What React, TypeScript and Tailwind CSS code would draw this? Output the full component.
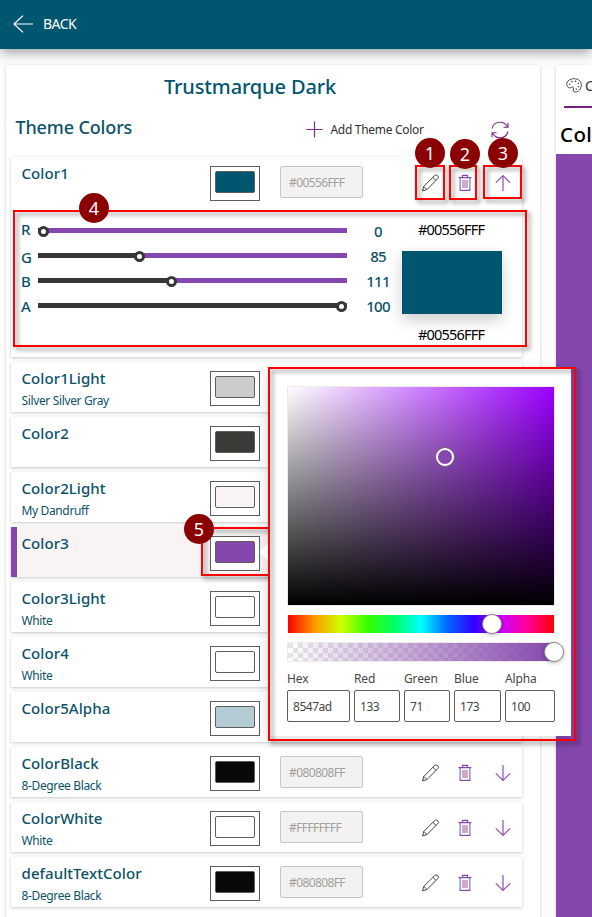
import React from "react";

type IconProps = { className?: string };

const BackArrow = () => (
  <svg width="20" height="18" viewBox="0 0 20 18" fill="none" stroke="#fff" strokeWidth="1.2">
    <path d="M20 9H1M10 .6 1 9l9 8.4" />
  </svg>
);

const Plus = () => (
  <svg className="shrink-0" width="17" height="17" viewBox="0 0 17 17" fill="none" stroke="#7b2a87" strokeWidth="1.2">
    <path d="M8.5 0.5v16M0.5 8.5h16" />
  </svg>
);

const Refresh = () => (
  <svg className="shrink-0" width="18" height="18" viewBox="0 0 18 18" fill="none" stroke="#7b2a87" strokeWidth="1.1">
    <path d="M1 7.500C1.900 3.900 5 1.300 9 1.300c3.400 0 6.200 1.900 7.500 4.900M17 1.700v4.500h-4.500" />
    <path d="M17 10.500c-.9 3.600-4 6.200-8 6.200-3.400 0-6.200-1.900-7.500-4.900M1 16.300v-4.500h4.500" />
  </svg>
);

const Palette = () => (
  <svg className="shrink-0" width="16" height="15" viewBox="0 0 16 15" fill="none" stroke="#4a4844" strokeWidth="1">
    <path d="M5.500 9.300C4 10.600.700 9.600.700 6.300.700 3 4 .700 8.200.700c4.300 0 7.100 2.500 7.100 6.300 0 4-2.700 7-6 7-2.300 0-2.500-1.600-1.800-3.100.6-1.300-.8-2.500-2-1.600Z" />
    <g fill="#4a4844" stroke="none">
      <circle cx="3.700" cy="6.200" r=".8" /><circle cx="6" cy="3.600" r=".8" /><circle cx="9.500" cy="3.200" r=".8" />
      <circle cx="12.300" cy="5.500" r=".8" /><circle cx="12.500" cy="8.700" r=".8" /><circle cx="10.300" cy="11.300" r=".8" />
    </g>
  </svg>
);

const Pencil = ({ className }: IconProps) => (
  <svg className={className} width="18" height="18" viewBox="0 0 18 18" fill="none" stroke="#45453f" strokeWidth="1">
    <path d="M1.500 16.900 2.800 12.400 13.600 1.600a2.150 2.150 0 0 1 3.100 3.100L5.900 15.600ZM11.900 3.300l3.100 3.100M2.800 12.400l3.100 3.200" />
  </svg>
);

const Trash = ({ className }: IconProps) => (
  <svg className={className} width="18" height="18" viewBox="0 0 18 18" fill="none" stroke="#8547ad" strokeWidth="1.2">
    <path d="M2.500 3.600h13M6.500 3.600V1.400h5v2.200" />
    <path d="M4.100 3.600v13M13.900 3.600v13" stroke="#7474cf" strokeWidth="1.200" />
    <path d="M3.700 16.400h10.600" />
    <path d="M7 6v8M9 6v8M11 6v8" stroke="#b76ca2" />
  </svg>
);

const Arrow = ({ up }: { up?: boolean }) => (
  <svg className={up ? "" : "rotate-180"} width="18" height="18" viewBox="0 0 18 18" fill="none" stroke="#9050b8" strokeWidth="1.2">
    <path d="M9 17V1.500M1.800 8.700 9 1.500l7.200 7.200" />
  </svg>
);

const Swatch = ({ fill }: { fill: string }) => (
  <div className="mt-[9px] h-[35px] w-[50px] shrink-0 border border-[#605e5c] bg-white p-1">
    <div className={`h-[22px] w-10 rounded-[2px] border border-[#605e5c] ${fill}`} />
  </div>
);

type RowData = { name: string; note?: string; fill: string; hex?: string; active?: boolean; open?: boolean };

const RowHead = ({ name, note, fill, hex, active, open }: RowData) => (
  <div className={`flex h-[50px] items-start ${active ? "border-l-[6px] border-[#8547ad] bg-[#f8f4f4]" : ""}`}>
    <div className={`shrink-0 text-[#0b5268] ${active ? "w-[193px] pl-[4.500px]" : "w-[199px] pl-[10.500px]"}`}>
      <div className="mt-[5px] text-[15px] leading-[22px] font-medium tracking-[0.005em]">{name}</div>
      {note && <div className="mt-[4px] text-[12px] leading-4 tracking-[-0.03em]">{note}</div>}
    </div>
    <Swatch fill={fill} />
    {hex && (
      <>
        <div className="mt-[9px] ml-5 flex h-8 w-[83px] items-center rounded-[2px] border border-[#c8c6c4] bg-[#f3f2f1] pt-px pl-2 text-[12px] tracking-[-0.05em] text-[#a19f9d]">
          {hex}
        </div>
        <div className="mt-[17px] ml-[58px] flex">
          <Pencil />
          <Trash className="ml-[17px]" />
          <div className="ml-[20px]"><Arrow up={open} /></div>
        </div>
      </>
    )}
  </div>
);

const rows: RowData[] = [
  { name: "Color1Light", note: "Silver Silver Gray", fill: "bg-[#cccccb]" },
  { name: "Color2", fill: "bg-[#3a3a36]" },
  { name: "Color2Light", note: "My Dandruff", fill: "bg-[#f8f4f4]" },
  { name: "Color3", fill: "bg-[#8547ad]", active: true },
  { name: "Color3Light", note: "White", fill: "bg-white" },
  { name: "Color4", note: "White", fill: "bg-white" },
  { name: "Color5Alpha", fill: "bg-[#b3ccd3]" },
  { name: "ColorBlack", note: "8-Degree Black", fill: "bg-[#080808]", hex: "#080808FF" },
  { name: "ColorWhite", note: "White", fill: "bg-white", hex: "#FFFFFFFF" },
  { name: "defaultTextColor", note: "8-Degree Black", fill: "bg-[#080808]", hex: "#080808FF" },
];

const cardShadow = "shadow-[0_1px_3px_rgba(0,0,0,0.22)]";

const channels = [
  { label: "R", value: 0, at: 5.5, shift: "pb-[3px]" },
  { label: "G", value: 85, at: 101.5, shift: "pt-[4px]" },
  { label: "B", value: 111, at: 133.5, shift: "pt-[2px]" },
  { label: "A", value: 100, at: 303.5, shift: "pt-[2px]" },
];

const Slider = ({ label, value, at, shift }: { label: string; value: number; at: number; shift: string }) => (
  <div className="flex h-[25px] items-center text-[15px] leading-[25px] font-medium text-[#0b5268]">
    <div className={`w-[17px] ${shift}`}>{label}</div>
    <div className="relative h-[5px] w-[309px] bg-[#8547ad]">
      <div className="h-full bg-[#373734]" style={{ width: at }} />
      <div className="absolute top-[-2.500px] h-[11px] w-[11px] rounded-full border-[3px] border-[#373734] bg-white" style={{ left: at - 5.5 }} />
    </div>
    <div className="ml-[11px] w-10 pt-[2px] text-center tracking-[-0.05em]">{value}</div>
  </div>
);

const fields = [
  { label: "Hex", value: "8547ad", box: "w-[63px]" },
  { label: "Red", value: "133", box: "w-[46px]" },
  { label: "Green", value: "71", box: "w-[46px]" },
  { label: "Blue", value: "173", box: "w-[47px]" },
  { label: "Alpha", value: "100", box: "w-[50px]" },
];

const Thumb = ({ className }: IconProps) => (
  <div className={`absolute h-5 w-5 rounded-full border border-[#8a8886] bg-white shadow-[0_1px_4px_rgba(0,0,0,0.3)] ${className}`} />
);

const Picker = () => (
  <div className="absolute top-[369px] left-[268px] h-[367px] w-[303px] bg-white pt-[18px] pl-[20px] shadow-[0_3px_14px_rgba(0,0,0,0.14)]">
    <div className="absolute top-[177px] left-[-6px] h-3 w-3 rotate-45 bg-white" />
    <div className="relative h-[218px] w-[266px] bg-[#9b00ff] shadow-[0_0_0_1px_#edebe9]">
      <div className="h-full bg-linear-to-r/srgb from-white to-transparent">
        <div className="h-full bg-linear-to-t/srgb from-black to-transparent" />
      </div>
      <div className="absolute top-[60px] left-[147px] h-5 w-5 rounded-full border border-[#77707d] bg-[#8547ad]">
        <div className="h-full rounded-full border-2 border-white" />
      </div>
    </div>
    <div className="relative mt-[10px] h-[18px] w-[266px] bg-[linear-gradient(to_left,red_0,#f09_10%,#cd00ff_20%,#3200ff_30%,#06f_40%,#00fffd_50%,#0f6_60%,#35ff00_70%,#cdff00_80%,#f90_90%,red_100%)]">
      <Thumb className="top-[-1px] left-[194px]" />
    </div>
    <div className="relative mt-[10px] h-[18px] w-[266px] bg-[repeating-conic-gradient(#fff_0_25%,#e6e6e6_0_50%)] bg-size-[10px_10px] shadow-[0_0_0_1px_#edebe9]">
      <div className="h-full bg-linear-to-r/srgb from-transparent to-[#8547ad]" />
      <Thumb className="top-[-1px] left-[256px]" />
    </div>
    <div className="mt-[10px] -ml-px flex gap-1 text-[12px] text-[#484644]">
      {fields.map((f) => (
        <div key={f.label} className={f.box}>
          <div className="h-[19px] leading-4 tracking-[-0.01em]">{f.label}</div>
          <div className="flex h-8 items-center rounded-[2px] border border-[#605e5c] pt-px pl-[5px] tracking-[-0.04em]">{f.value}</div>
        </div>
      ))}
    </div>
  </div>
);

const Frame = ({ className }: IconProps) => (
  <div className={`pointer-events-none absolute border-2 border-[#ff0000] drop-shadow-[3px_3px_2px_rgba(0,0,0,0.45)] ${className}`} />
);

const Badge = ({ n, className }: { n: number; className: string }) => (
  <div className={`absolute flex h-[30px] w-[30px] items-center justify-center rounded-full bg-[#8b0000] text-[18px] leading-none text-white ${className}`}>
    {n}
  </div>
);

export default function App() {
  return (
    <div className="relative h-[917px] w-[592px] overflow-hidden bg-[#fdfdfd] font-['Noto_Sans',sans-serif]">
      <header className="relative flex h-[49px] items-center bg-[#00556f] pb-px pl-[13px] text-white shadow-[0_3px_12px_rgba(0,0,0,0.4)]">
        <BackArrow />
        <span className="ml-[10px] pb-px text-[14px] tracking-[-0.04em]">BACK</span>
      </header>

      <main className="flex items-start pt-4 pl-[6px]">
        <section className="h-[870px] w-[534px] shrink-0 bg-white pl-[5px] shadow-[0_1px_3px_rgba(0,0,0,0.2)]">
          <h1 className="-ml-[5px] pt-[7px] pr-[46px] text-center text-[20px] leading-[30px] font-medium tracking-[-0.007em] text-[#00556f]">Trustmarque Dark</h1>
          <div className="flex h-[55px] items-center pl-[4.500px]">
            <h2 className="w-[290px] shrink-0 pb-[5px] text-[18px] font-medium tracking-[-0.008em] text-[#0b5268]">Theme Colors</h2>
            <Plus />
            <span className="ml-2 w-[160px] shrink-0 text-[12px] tracking-[-0.025em] text-[#323130]">Add Theme Color</span>
            <Refresh />
          </div>

          <div className={`h-[200px] w-[511px] bg-white ${cardShadow}`}>
            <RowHead name="Color1" fill="bg-[#00556f]" hex="#00556FFF" open />
            <div className="flex pt-[11px] pl-[10px]">
              <div>
                {channels.map((c) => <Slider key={c.label} {...c} />)}
              </div>
              <div className="ml-[4px] flex w-[100px] flex-col items-center text-[14.5px] tracking-[-0.055em] text-black">
                <div className="-ml-[2px] h-[33px] leading-[23px]">#00556FFF</div>
                <div className="h-[63px] w-[100px] bg-[#00556f] shadow-[0_6px_14px_rgba(0,0,0,0.2)]" />
                <div className="mt-[9px] -ml-[2px] leading-[23px]">#00556FFF</div>
              </div>
            </div>
          </div>
          {rows.map((r) => (
            <div key={r.name} className={`mt-[5px] w-[511px] bg-white ${cardShadow}`}>
              <RowHead {...r} />
            </div>
          ))}
        </section>

        <aside className="ml-4 h-[870px] w-9 shrink-0 overflow-hidden bg-white shadow-[0_1px_3px_rgba(0,0,0,0.2)]">
          <div className="ml-2 flex h-[43px] items-center border-b-2 border-[#6f2277] pl-[2px]">
            <Palette />
            <span className="ml-[3px] text-[14px] text-[#323130]">Colors</span>
          </div>
          <div className="flex h-[52px] items-center pl-1 text-[20.5px] font-medium tracking-[0.02em] text-black">Color1</div>
          <div className="-mt-[6px] h-[790px] bg-[#8547ad]" />
        </aside>
      </main>

      <Frame className="top-[527px] left-[201px] h-[49px] w-[69px]" />
      <Picker />
      <Frame className="top-[367px] left-[268px] h-[374px] w-[308px]" />
      <Frame className="top-[210px] left-[13px] h-[137px] w-[514px]" />
      <Frame className="top-[165px] left-[415px] h-[35px] w-[30px]" />
      <Frame className="top-[165px] left-[449px] h-[35px] w-[28px]" />
      <Frame className="top-[165px] left-[483px] h-[34px] w-[39px]" />
      <Badge n={1} className="top-[138px] left-[415px]" />
      <Badge n={2} className="top-[139px] left-[450px]" />
      <Badge n={3} className="top-[138px] left-[488px]" />
      <Badge n={4} className="top-[193px] left-[79px]" />
      <Badge n={5} className="top-[514px] left-[184px]" />
    </div>
  );
}
